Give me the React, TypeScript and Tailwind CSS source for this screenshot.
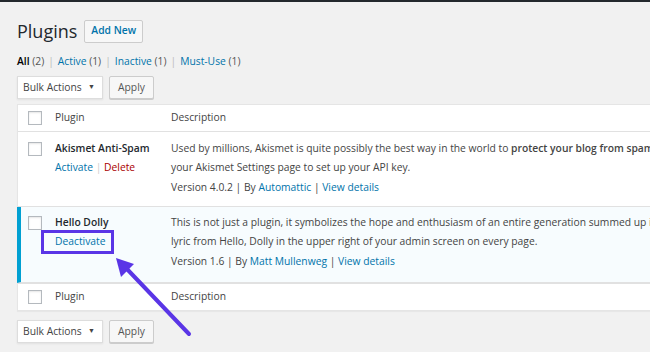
import React from 'react';

const Check = () => (
  <span className="block w-[14px] h-[14px] border border-[#b4b9be] bg-white shadow-[inset_0_1px_2px_rgba(0,0,0,0.1)]" />
);

const BulkBar = () => (
  <div className="flex items-center gap-[6px] whitespace-nowrap">
    <div className="w-[86px] h-[23px] border border-[#ddd] bg-white flex items-center justify-between pl-[5px] pr-[7px] shadow-[0_1px_2px_rgba(0,0,0,0.07)]">
      <span>Bulk Actions</span>
      <span className="text-[7px]">▼</span>
    </div>
    <div className="w-[45px] h-[23px] border border-[#ccc] bg-[#f7f7f7] rounded-[2px] flex items-center justify-center shadow-[0_1px_0_#ccc] text-[#555]">
      Apply
    </div>
  </div>
);

const HeadRow = ({ top }: { top?: boolean }) => (
  <div className={`flex items-center h-[27px] ${top ? 'border-b' : 'border-t'} border-[#e1e1e1]`}>
    <div className="w-[37px] shrink-0 pl-[10px]"><Check /></div>
    <div className="w-[116px] shrink-0">Plugin</div>
    <div>Description</div>
  </div>
);

export default function App() {
  return (
    <div className="w-[650px] h-[352px] overflow-hidden bg-[#f1f1f1] text-[#444] text-[10.3px] font-['Segoe_UI','Open_Sans',sans-serif] relative">
      <div className="h-[2px] bg-[#23282d]" />
      <div className="pl-[17px] pt-[17px]">
        <div className="flex items-center gap-[7px] h-[24px]">
          <h1 className="text-[18px] text-[#23282d] leading-[24px]">Plugins</h1>
          <span className="h-[23px] px-[6px] border border-[#ccc] bg-[#f7f7f7] rounded-[2px] flex items-center text-[#0073aa] font-semibold">
            Add New
          </span>
        </div>
        <div className="mt-[10px] h-[18px] flex items-center text-[#555] gap-[4px] whitespace-nowrap">
          <span><span className="text-black font-semibold">All</span> (2)</span>
          <span className="text-[#bbb]">|</span>
          <span className="text-[#0073aa]">Active <span className="text-[#555]">(1)</span></span>
          <span className="text-[#bbb]">|</span>
          <span className="text-[#0073aa]">Inactive <span className="text-[#555]">(1)</span></span>
          <span className="text-[#bbb]">|</span>
          <span className="text-[#0073aa]">Must-Use <span className="text-[#555]">(1)</span></span>
        </div>
        <div className="mt-[5px]"><BulkBar /></div>
        <div className="mt-[5px] w-[700px] bg-white border border-[#e5e5e5] shadow-[0_1px_1px_rgba(0,0,0,0.04)]">
          <HeadRow top />
          <div className="flex pt-[7px] pb-[9px] border-b border-[#e1e1e1] leading-[19px]">
            <div className="w-[37px] shrink-0 pl-[10px] pt-[3px]"><Check /></div>
            <div className="w-[116px] shrink-0 whitespace-nowrap">
              <div className="font-semibold text-[#23282d]">Akismet Anti-Spam</div>
              <div><span className="text-[#0073aa]">Activate</span> <span className="text-[#ccc]">|</span> <span className="text-[#a00]">Delete</span></div>
            </div>
            <div className="flex-1 whitespace-nowrap">
              <p>Used by millions, Akismet is quite possibly the best way in the world to <strong className="font-semibold">protect your blog from spam</strong>. It keeps your site</p>
              <p>your Akismet Settings page to set up your API key.</p>
              <p className="mt-[1px]">Version 4.0.2 | By <span className="text-[#0073aa]">Automattic</span> | <span className="text-[#0073aa]">View details</span></p>
            </div>
          </div>
          <div className="flex pt-[6px] pb-[11px] border-b border-[#e1e1e1] bg-[#f7fcfe] border-l-[4px] border-l-[#00a0d2] -ml-px leading-[19px]">
            <div className="w-[34px] shrink-0 pl-[7px] pt-[3px]"><Check /></div>
            <div className="w-[116px] shrink-0 whitespace-nowrap">
              <div className="font-semibold text-[#23282d]">Hello Dolly</div>
              <div className="text-[#0073aa]">Deactivate</div>
            </div>
            <div className="flex-1 whitespace-nowrap">
              <p>This is not just a plugin, it symbolizes the hope and enthusiasm of an entire generation summed up in two words</p>
              <p>lyric from Hello, Dolly in the upper right of your admin screen on every page.</p>
              <p className="mt-[1px]">Version 1.6 | By <span className="text-[#0073aa]">Matt Mullenweg</span> | <span className="text-[#0073aa]">View details</span></p>
            </div>
          </div>
          <HeadRow />
        </div>
        <div className="mt-[9px]"><BulkBar /></div>
      </div>
      <div className="absolute left-[41px] top-[230px] w-[73px] h-[24px] border-[3px] border-[#5a35e6]" />
      <svg className="absolute left-0 top-0" width="650" height="352">
        <line x1="189" y1="334" x2="126" y2="268" stroke="#5a35e6" strokeWidth="4" strokeLinecap="round" />
        <polygon points="116,258 134,264 121,277" fill="#5a35e6" />
      </svg>
    </div>
  );
}
